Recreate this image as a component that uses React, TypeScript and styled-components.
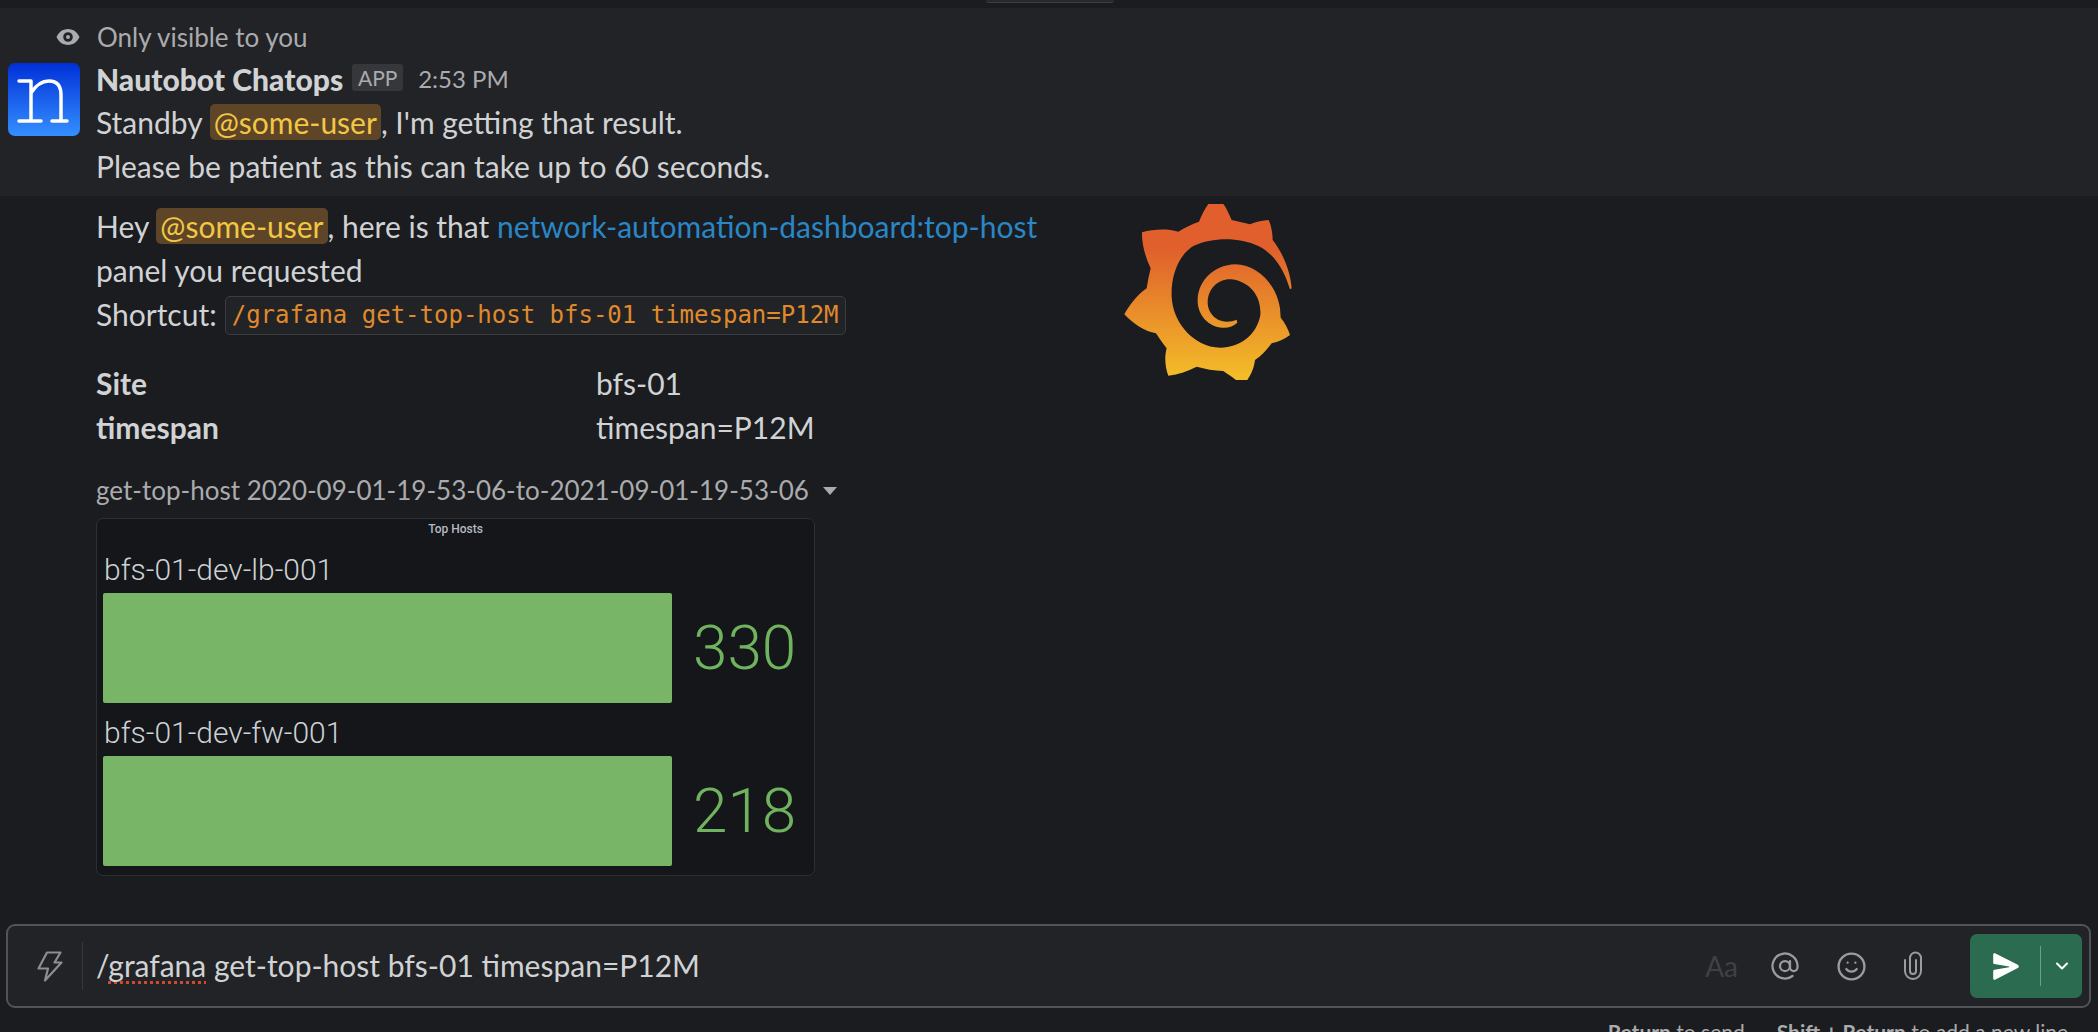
import styled, { createGlobalStyle } from "styled-components";
import { AtSign, Smile } from "lucide-react";

const GlobalStyle = createGlobalStyle`
  html, body {
    margin: 0;
    height: 100%;
    background: #1a1c20;
    overflow: hidden;
  }
  * {
    box-sizing: border-box;
  }
`;

const Page = styled.div`
  height: 1032px;
  overflow: hidden;
  display: flex;
  flex-direction: column;
  background: #1a1c20;
  color: #d1d2d3;
  font-family: Lato, "Noto Sans", sans-serif;
  font-size: 30px;
  line-height: 44px;
`;

const TopStrip = styled.div`
  height: 8px;
  flex: none;
  display: flex;
  justify-content: center;
  padding-left: 1px;
`;

const ScrollPill = styled.div`
  width: 128px;
  height: 3px;
  border-radius: 0 0 12px 12px;
  background: #26282c;
  border-bottom: 1px solid #3c3e42;
`;

// 본인에게만 보이는 메시지 영역
const Ephemeral = styled.section`
  height: 188px;
  flex: none;
  background: #212327;
  padding: 9px 8px 0;
`;

const VisibleNote = styled.div`
  display: flex;
  align-items: center;
  height: 40px;
  padding-left: 48px;
  gap: 17px;
  color: #ababad;
  font-size: 26px;
`;

const MessageRow = styled.div`
  display: flex;
  gap: 16px;
  margin-top: 7px;
`;

const Avatar = styled.div`
  width: 72px;
  height: 73px;
  flex: none;
  border-radius: 7px;
  background: linear-gradient(180deg, #0030d8 0%, #358fff 100%);
  margin-top: -1px;
`;

const AvatarMark = styled.svg`
  display: block;
  width: 72px;
  height: 72px;
`;

const MessageBody = styled.div`
  min-width: 0;
  margin-top: -6px;
`;

const HeaderLine = styled.div`
  display: flex;
  align-items: center;
  height: 42px;
`;

const SenderName = styled.span`
  font-weight: 900;
  font-size: 30px;
`;

const AppBadge = styled.span`
  margin: -4px 0 0 9px;
  width: 51px;
  height: 27px;
  border-radius: 3px;
  background: #35373b;
  color: #ababad;
  font-size: 21px;
  line-height: 27px;
  text-align: center;
`;

const TimeStamp = styled.span`
  margin-left: 15px;
  color: #ababad;
  font-size: 24px;
`;

const TextLine = styled.div`
  white-space: nowrap;
`;

const Mention = styled.span`
  background: #5f4528;
  color: #f2c744;
  border-radius: 5px;
  padding: 0 4px;
`;

const Link = styled.span`
  color: #2b86c5;
`;

const CodeChip = styled.code`
  display: inline-block;
  margin: 4px 0 0 8px;
  height: 39px;
  padding: 0 6px;
  border: 1px solid #3b3d41;
  border-radius: 5px;
  background: #212327;
  color: #e08a2c;
  font-family: "DejaVu Sans Mono", "Liberation Mono", monospace;
  font-size: 24px;
  line-height: 36px;
  vertical-align: top;
`;

const MainArea = styled.main`
  flex: 1;
  min-height: 0;
  padding: 8px 0 0 96px;
  display: flex;
`;

const Section = styled.div`
  width: 1028px;
  flex: none;
`;

const GrafanaLogo = styled.svg`
  width: 168px;
  height: 176px;
  flex: none;
`;

const FieldGrid = styled.div`
  display: grid;
  grid-template-columns: 500px 1fr;
  margin-top: 25px;
`;

const FieldName = styled.div`
  font-weight: 700;
`;

const FieldValue = styled.div``;

const FileTitle = styled.div`
  display: flex;
  align-items: center;
  gap: 14px;
  margin-top: 21px;
  height: 40px;
  color: #ababad;
  font-size: 26px;
`;

const Caret = styled.span`
  width: 0;
  height: 0;
  border-left: 7px solid transparent;
  border-right: 7px solid transparent;
  border-top: 8px solid #ababad;
  margin-top: 2px;
`;

const PanelImage = styled.figure`
  width: 719px;
  height: 358px;
  margin: 8px 0 0;
  padding: 0 6px;
  background: #141619;
  border: 1px solid #2d2f33;
  border-radius: 7px;
  font-family: Roboto, sans-serif;
`;

const PanelTitle = styled.div`
  text-align: center;
  color: #b4bac1;
  font-size: 12px;
  font-weight: 500;
  line-height: 20px;
  margin-bottom: 10px;
`;

const GaugeBlock = styled.div`
  margin-top: 9px;
`;

const GaugeLabel = styled.div`
  color: #ccd1d6;
  font-size: 30px;
  font-weight: 300;
  line-height: 42px;
  padding-left: 1px;
`;

const GaugeRow = styled.div`
  display: flex;
  align-items: center;
  margin-top: 2px;
`;

const GaugeBar = styled.div`
  width: 569px;
  height: 110px;
  background: #78b566;
  border-radius: 2px;
  flex: none;
`;

const GaugeValue = styled.div`
  margin-left: 21px;
  color: #70b35f;
  font-size: 62px;
  font-weight: 300;
  line-height: 70px;
`;

const Composer = styled.div`
  flex: none;
  height: 84px;
  margin: 0 7px 0 6px;
  border: 2px solid #515356;
  border-radius: 9px;
  background: #212327;
  display: flex;
  align-items: center;
  padding-right: 7px;
`;

const ShortcutButton = styled.div`
  width: 75px;
  height: 48px;
  flex: none;
  display: flex;
  align-items: center;
  justify-content: center;
  padding-left: 9px;
  border-right: 1px solid #35373b;
`;

const ComposerText = styled.div`
  flex: 1;
  padding-left: 13px;
  white-space: nowrap;
  margin-top: -2px;
`;

const Misspelled = styled.span`
  text-decoration: underline dotted #cf4a2c 3px;
  text-underline-offset: 4px;
  text-decoration-skip-ink: none;
`;

const FormatToggle = styled.span`
  color: #3f4145;
  font-size: 28px;
  margin-right: 32px;
`;

const ToolIcons = styled.div`
  display: flex;
  align-items: center;
  gap: 36px;
  margin-right: 47px;
  color: #9b9c9e;
`;

const SendButton = styled.div`
  width: 112px;
  height: 64px;
  flex: none;
  display: flex;
  align-items: center;
  border-radius: 7px;
  background: #2b6c50;
`;

const SendIconCell = styled.div`
  width: 71px;
  height: 40px;
  display: flex;
  align-items: center;
  justify-content: center;
  border-right: 1px solid #6f9f8a;
`;

const SendMenuCell = styled.div`
  flex: 1;
  display: flex;
  justify-content: center;
`;

const HintRow = styled.div`
  flex: none;
  height: 24px;
  display: flex;
  justify-content: flex-end;
  gap: 32px;
  padding: 11px 30px 0 0;
  color: #ababad;
  font-size: 21px;
  line-height: 26px;
  white-space: nowrap;
`;

const hosts = [
  { name: "bfs-01-dev-lb-001", value: 330 },
  { name: "bfs-01-dev-fw-001", value: 218 },
];

function EyeIcon() {
  return (
    <svg width="24" height="16" viewBox="0 0 24 16">
      <path
        fillRule="evenodd"
        fill="#ababad"
        d="M12 0C6.5 0 2.4 3.6.5 8c1.900 4.400 6 8 11.500 8s9.600-3.600 11.500-8C21.600 3.600 17.500 0 12 0Zm0 3.200a4.800 4.800 0 1 1 0 9.600 4.800 4.800 0 0 1 0-9.600Zm0 2.800a2 2 0 1 0 0 4 2 2 0 0 0 0-4Z"
      />
    </svg>
  );
}

function BoltIcon() {
  return (
    <svg width="26" height="31" viewBox="0 0 26 31">
      <path
        d="M10 1.500h13.500L17.500 11.500h7L8 29.500l3-12H1.500Z"
        fill="none"
        stroke="#8d8e90"
        strokeWidth="2.200"
        strokeLinejoin="round"
      />
    </svg>
  );
}

function ClipIcon() {
  return (
    <svg width="20" height="30" viewBox="0 0 20 30">
      <path
        d="M2 9V20a8 8 0 0 0 16 0V7a5.500 5.500 0 0 0-11 0V20a3 3 0 0 0 6 0V9"
        fill="none"
        stroke="#9b9c9e"
        strokeWidth="2"
        strokeLinecap="round"
      />
    </svg>
  );
}

function SendIcon() {
  return (
    <svg width="27" height="27" viewBox="0 0 27 27">
      <path
        fill="#fff"
        d="M1.200 1.500c0-1 .9-1.500 1.800-1.200l22.800 11.500c1.300.7 1.300 2.500 0 3.200L3 26.700c-.9.400-1.800-.2-1.800-1.200v-7.300c0-.7.500-1.300 1.200-1.400L17 14.300c.4-.1.400-.6 0-.7L2.400 11.100c-.7-.1-1.200-.7-1.200-1.400Z"
      />
    </svg>
  );
}

export default function App() {
  return (
    <>
      <GlobalStyle />
      <Page>
        <TopStrip>
          <ScrollPill />
        </TopStrip>
        <Ephemeral>
          <VisibleNote>
            <EyeIcon />
            <span>Only visible to you</span>
          </VisibleNote>
          <MessageRow>
            <Avatar>
              <AvatarMark viewBox="0 0 72 72">
                <path
                  d="M11 18h12v40M11 58h22M23 30c5-8 11-12 18-12 8 0 12 5 12 14v26M44 58h15"
                  fill="none"
                  stroke="#fff"
                  strokeWidth="3.500"
                  strokeLinecap="round"
                  strokeLinejoin="round"
                />
              </AvatarMark>
            </Avatar>
            <MessageBody>
              <HeaderLine>
                <SenderName>Nautobot Chatops</SenderName>
                <AppBadge>APP</AppBadge>
                <TimeStamp>2:53 PM</TimeStamp>
              </HeaderLine>
              <TextLine>
                Standby <Mention>@some-user</Mention>, I'm getting that result.
              </TextLine>
              <TextLine>Please be patient as this can take up to 60 seconds.</TextLine>
            </MessageBody>
          </MessageRow>
        </Ephemeral>

        <MainArea>
          <Section>
            <TextLine>
              Hey <Mention>@some-user</Mention>, here is that{" "}
              <Link>network-automation-dashboard:top-host</Link>
            </TextLine>
            <TextLine>panel you requested</TextLine>
            <TextLine>
              Shortcut:<CodeChip>/grafana get-top-host bfs-01 timespan=P12M</CodeChip>
            </TextLine>
            <FieldGrid>
              <FieldName>Site</FieldName>
              <FieldValue>bfs-01</FieldValue>
              <FieldName>timespan</FieldName>
              <FieldValue>timespan=P12M</FieldValue>
            </FieldGrid>
            <FileTitle>
              <span>get-top-host 2020-09-01-19-53-06-to-2021-09-01-19-53-06</span>
              <Caret />
            </FileTitle>
            <PanelImage>
              <PanelTitle>Top Hosts</PanelTitle>
              {hosts.map((host) => (
                <GaugeBlock key={host.name}>
                  <GaugeLabel>{host.name}</GaugeLabel>
                  <GaugeRow>
                    <GaugeBar />
                    <GaugeValue>{host.value}</GaugeValue>
                  </GaugeRow>
                </GaugeBlock>
              ))}
            </PanelImage>
          </Section>
          <GrafanaLogo viewBox="133 72 502 528">
            <defs>
              <linearGradient id="grafanaFill" x1="0" y1="0" x2="0" y2="1">
                <stop offset="0.25" stopColor="#e05f2c" />
                <stop offset="1" stopColor="#f3bf28" />
              </linearGradient>
            </defs>
            <path
              fill="url(#grafanaFill)"
              d="M385 72H430C440 85 448 105 455 120L510 133C530 125 548 121 566 120C574 138 578 160 578 180C605 215 630 265 635 325L630 328C615 280 590 225 535 198C480 172 400 170 340 198C295 225 272 290 275 350C278 420 330 490 405 502C470 510 530 470 541 405C545 350 510 305 455 298C415 295 385 325 383 365C382 400 410 425 440 425C452 425 462 422 470 419L472 428C462 438 445 444 428 443C385 440 352 405 353 360C354 300 405 255 465 253C535 255 590 315 600 385L602 413C615 428 625 448 630 465C612 478 595 485 575 490C560 510 545 528 525 540C522 565 512 585 502 600H468C455 590 442 582 430 573C402 572 375 567 350 560C325 573 295 583 265 587C255 560 253 530 260 505C248 490 238 475 228 460C195 455 160 432 133 403C145 380 170 345 200 325C203 305 207 285 212 265C195 230 185 190 186 157C220 148 260 145 295 155C315 143 335 132 357 125C365 105 375 85 385 72Z"
            />
          </GrafanaLogo>
        </MainArea>

        <Composer>
          <ShortcutButton>
            <BoltIcon />
          </ShortcutButton>
          <ComposerText>
            /<Misspelled>grafana</Misspelled> get-top-host bfs-01 timespan=P12M
          </ComposerText>
          <FormatToggle>Aa</FormatToggle>
          <ToolIcons>
            <AtSign size={30} strokeWidth={1.8} />
            <Smile size={31} strokeWidth={1.8} />
            <ClipIcon />
          </ToolIcons>
          <SendButton>
            <SendIconCell>
              <SendIcon />
            </SendIconCell>
            <SendMenuCell>
              <svg width="14" height="10" viewBox="0 0 14 10">
                <path d="M2 2.500l5 5 5-5" fill="none" stroke="#fff" strokeWidth="2" strokeLinecap="round" strokeLinejoin="round" />
              </svg>
            </SendMenuCell>
          </SendButton>
        </Composer>
        <HintRow>
          <span>
            <b>Return</b> to send
          </span>
          <span>
            <b>Shift + Return</b> to add a new line
          </span>
        </HintRow>
      </Page>
    </>
  );
}
